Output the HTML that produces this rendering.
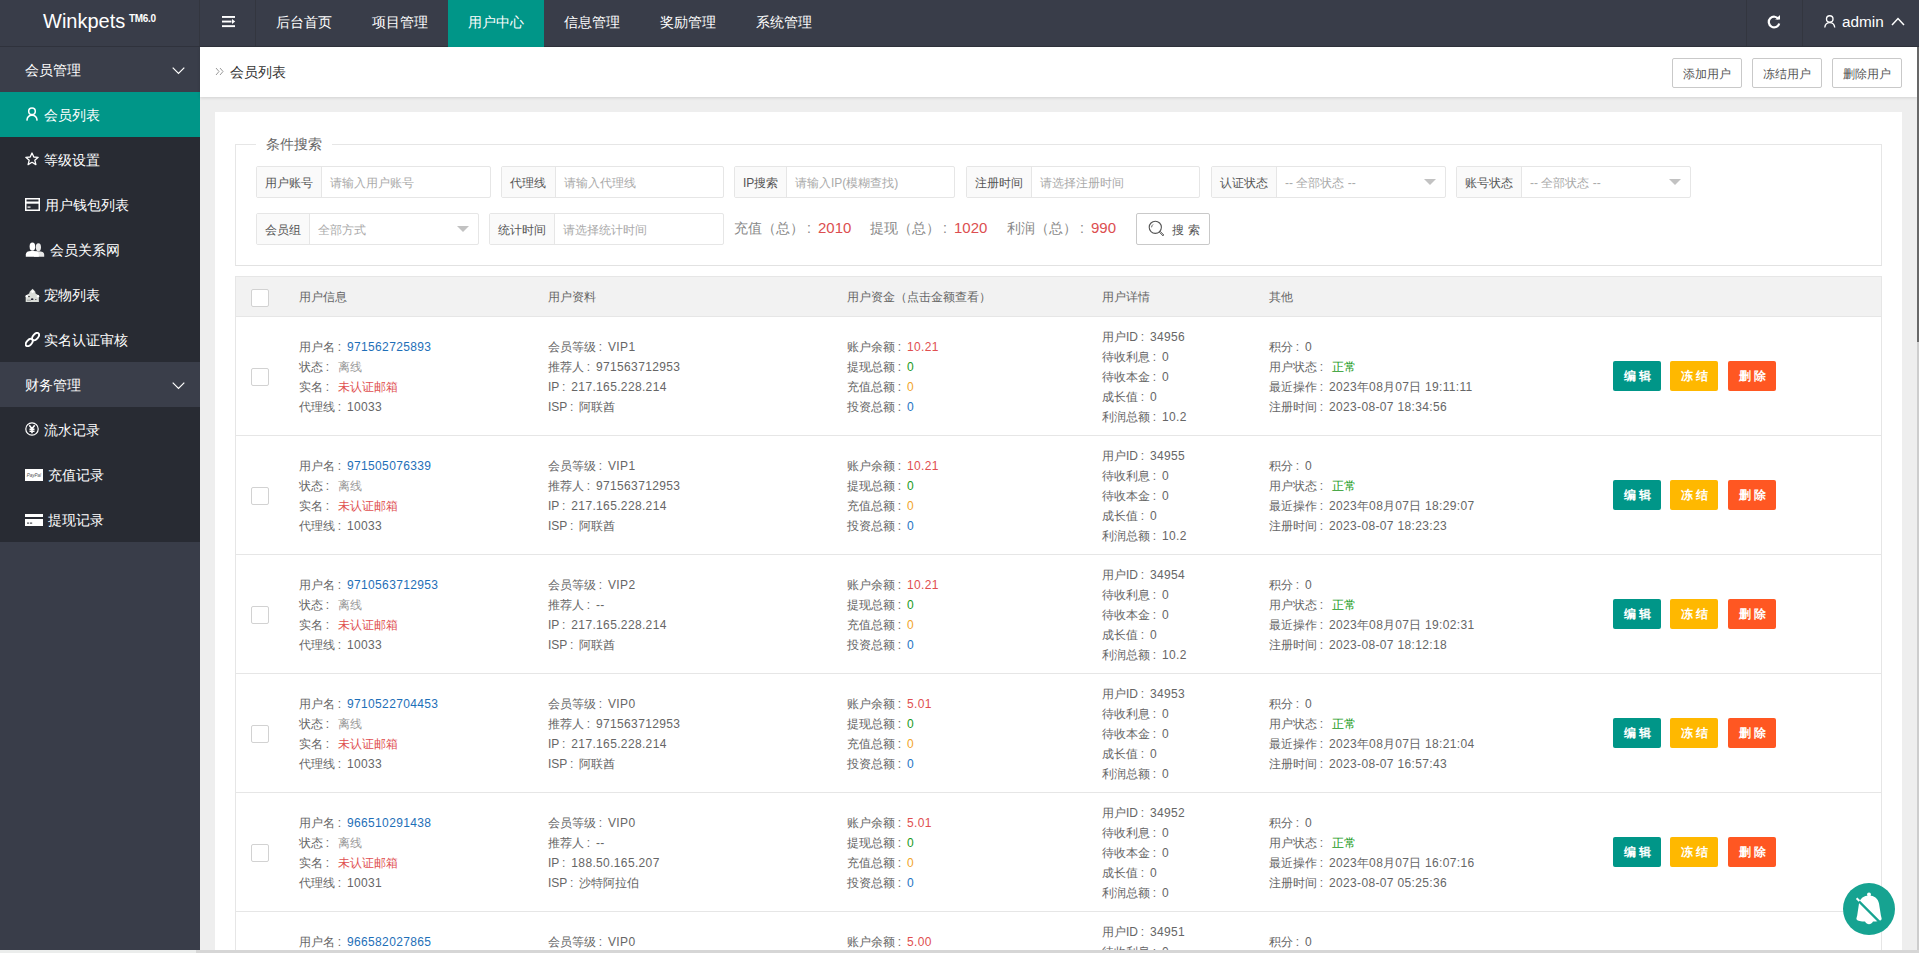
<!DOCTYPE html><html><head><meta charset="utf-8"><style>*{margin:0;padding:0;box-sizing:border-box}
html,body{width:1919px;height:953px;overflow:hidden;background:#eee;font-family:"Liberation Sans",sans-serif;color:#666;font-size:12px}
.abs{position:absolute}
#hdr{position:absolute;left:0;top:0;width:1919px;height:47px;background:#393D49;border-bottom:1px solid #2f323c}
.logo{position:absolute;left:43px;top:9px;color:#fff;font-size:20px;white-space:nowrap;line-height:24px}
.logo sup{font-size:10px;font-weight:bold;letter-spacing:-.3px;position:absolute;left:86px;top:4px;line-height:12px;vertical-align:baseline}
.vsep{position:absolute;top:0;width:1px;height:46px;background:#33363f}
.nav{position:absolute;top:0;height:47px;line-height:44px;color:#fff;font-size:14px;padding:0 20px}
.nav.on{background:#009688}
#side{position:absolute;left:0;top:47px;width:200px;height:903px;background:#393D49}
.sg{position:absolute;left:0;width:200px;height:45px;line-height:46px;color:#fff;font-size:14px;padding-left:25px;background:#3a3e4a}
.sc{position:absolute;left:0;width:200px;height:45px;line-height:47px;color:#fff;font-size:14px;background:#282B33}
.sc.on{background:#009688}
.sc span{position:absolute;top:0}
.sc svg{position:absolute}
.chev{position:absolute;left:171.5px;top:20px}
#bc{position:absolute;left:200px;top:47px;width:1717px;height:50px;background:#fff;box-shadow:0 1px 3px rgba(0,0,0,.12)}
.tbtn{position:absolute;top:11px;height:30px;width:70px;border:1px solid #C9C9C9;border-radius:2px;line-height:30px;text-align:center;color:#555;font-size:12px;background:#fff}
#card{position:absolute;left:215px;top:112px;width:1687px;height:850px;background:#fff}
fieldset{position:absolute;left:20px;top:32px;width:1647px;height:122px;border:1px solid #e6e6e6;border-bottom-color:#e2e2e2}
.legend{position:absolute;left:41px;top:22px;background:#fff;padding:0 10px;font-size:14px;color:#666;line-height:20px}
.fi{position:absolute;height:32px;border:1px solid #e6e6e6;border-radius:2px;background:#fff}
.fi .lb{position:absolute;left:0;top:0;height:30px;line-height:32px;padding:0 8px;background:#FAFAFA;border-right:1px solid #e6e6e6;color:#555;font-size:12px;white-space:nowrap}
.fi .ph{position:absolute;top:0;line-height:32px;color:#aaa;font-size:12px;white-space:nowrap}
.fi .tri{position:absolute;top:12px;width:0;height:0;border-left:6px solid transparent;border-right:6px solid transparent;border-top:6px solid #c2c2c2}
.stat{position:absolute;top:101px;font-size:14px;color:#888;white-space:nowrap;line-height:30px}
.stat b{font-weight:normal;color:#dc4e50;font-size:15px}
.sbtn{position:absolute;left:921px;top:101px;width:74px;height:32px;border:1px solid #c9c9c9;border-radius:2px;background:#fff;color:#555;font-size:12px;line-height:30px}
#tbl{position:absolute;left:20px;top:164px;width:1647px;height:700px;border-left:1px solid #e6e6e6;border-right:1px solid #e6e6e6;border-top:1px solid #e6e6e6}
.th{position:absolute;left:0;top:0;width:1645px;height:40px;background:#f2f2f2;border-bottom:1px solid #e6e6e6}
.th span{position:absolute;top:12px;line-height:16px;color:#666}
.cb{position:absolute;width:18px;height:18px;border:1px solid #d2d2d2;background:#fff;border-radius:2px}
.row{position:absolute;left:0;width:1645px;height:119px;border-bottom:1px solid #e6e6e6}
.col{position:absolute;line-height:20px;color:#666;white-space:nowrap}
.blue{color:#1E6FB8}.red{color:#e04f50}.grn{color:#1a9a22}.org{color:#f2a52a}.lbl{color:#2474c4}.gry{color:#999}
.ab{position:absolute;top:44px;height:30px;width:48px;line-height:30px;text-align:center;color:#fff;font-size:12px;border-radius:2px;letter-spacing:3px;text-indent:3px}
.fab{position:absolute;left:1843px;top:883px;width:52px;height:52px;border-radius:50%;background:#16a391}
#vs{position:absolute;left:1917px;top:47px;width:2px;height:295px;background:#686868}
#vt{position:absolute;left:1917px;top:342px;width:2px;height:608px;background:#cdcdcd}
#hs{position:absolute;left:0;top:950px;width:1919px;height:3px;background:#d6d6d6}

.n{font-style:normal;letter-spacing:.35px}
.ab{font-weight:bold}
.c{font-style:normal;display:inline-block;width:1em;padding-left:.22em}
</style></head><body>
<div id="hdr">
<div class="logo">Winkpets<sup>TM6.0</sup></div>
<div class="vsep" style="left:199px"></div><div class="vsep" style="left:255px"></div>
<svg class="abs" style="left:222px;top:16px" width="14" height="12" viewBox="0 0 14 12"><rect x="0" y="0" width="13" height="1.9" fill="#fff"/><rect x="0" y="4.6" width="9.5" height="1.9" fill="#fff"/><path d="M10 3 L13.2 5.55 L10 8.1Z" fill="#fff"/><rect x="0" y="9.2" width="13" height="1.9" fill="#fff"/></svg>
<div class="nav" style="left:256px">后台首页</div>
<div class="nav" style="left:352px">项目管理</div>
<div class="nav on" style="left:448px">用户中心</div>
<div class="nav" style="left:544px">信息管理</div>
<div class="nav" style="left:640px">奖励管理</div>
<div class="nav" style="left:736px">系统管理</div>
<div class="vsep" style="left:1746px"></div><div class="vsep" style="left:1802px"></div>
<svg class="abs" style="left:1767px;top:15px" width="14" height="14" viewBox="0 0 14 14"><path d="M11.6 4.2 A5.3 5.3 0 1 0 12.2 8.5" fill="none" stroke="#fff" stroke-width="2.2"/><path d="M8.2 4.6 L13 4.6 L13 0 Z" fill="#fff"/></svg>
<svg class="abs" style="left:1824px;top:15px" width="11.5" height="13" viewBox="0 0 12 14" preserveAspectRatio="none"><circle cx="6" cy="4.2" r="3.4" fill="none" stroke="#fff" stroke-width="1.4"/><path d="M0.8 13.5 C1.2 9.8 3.2 8.2 6 8.2 C8.8 8.2 10.8 9.8 11.2 13.5" fill="none" stroke="#fff" stroke-width="1.4"/></svg>
<div class="abs" style="left:1842px;top:12px;color:#fff;font-size:15.3px;line-height:20px">admin</div>
<svg class="abs" style="left:1891px;top:17px" width="14" height="9" viewBox="0 0 14 9"><path d="M1 8 L7 1.5 L13 8" fill="none" stroke="#fff" stroke-width="1.5"/></svg>
</div>
<div id="side">
<div class="sg" style="top:0">会员管理<svg class="chev" width="13" height="8" viewBox="0 0 13 8"><path d="M0.7 0.7 L6.5 6.5 L12.3 0.7" fill="none" stroke="#fff" stroke-width="1.2"/></svg></div>
<div class="sc on" style="top:45px"><svg style="left:26px;top:15px" width="12" height="14" viewBox="0 0 12 14"><circle cx="6" cy="4.2" r="3.3" fill="none" stroke="#fff" stroke-width="1.5"/><path d="M0.9 13.6 C1.2 9.8 3.2 8.3 6 8.3 C8.8 8.3 10.8 9.8 11.1 13.6" fill="none" stroke="#fff" stroke-width="1.5"/></svg><span style="left:44px">会员列表</span></div>
<div class="sc" style="top:90px"><svg style="left:25px;top:15px" width="14" height="14" viewBox="0 0 14 14"><path d="M7 1 L8.8 5 L13.2 5.3 L9.8 8.2 L10.9 12.6 L7 10.3 L3.1 12.6 L4.2 8.2 L0.8 5.3 L5.2 5Z" fill="none" stroke="#fff" stroke-width="1.3" stroke-linejoin="round"/></svg><span style="left:44px">等级设置</span></div>
<div class="sc" style="top:135px"><svg style="left:25px;top:16px" width="15" height="13" viewBox="0 0 15 13"><rect x="0.75" y="0.75" width="13.5" height="11.5" fill="none" stroke="#fff" stroke-width="1.5"/><rect x="0.75" y="3.5" width="13.5" height="2.2" fill="#fff"/><rect x="2.5" y="8.5" width="3" height="1.2" fill="#fff"/></svg><span style="left:45px">用户钱包列表</span></div>
<div class="sc" style="top:180px"><svg style="left:25px;top:15px" width="20" height="15" viewBox="0 0 20 15"><ellipse cx="13.4" cy="5.2" rx="2.6" ry="3.9" fill="#e8e8e8"/><path d="M9 15 L9 11 C10 9.6 11.5 9.2 13.5 9.2 C17 9.2 19.2 10.2 19.2 12.6 L19.2 14.8 L9 14.8Z" fill="#e8e8e8"/><ellipse cx="7.4" cy="4.7" rx="2.8" ry="4.1" fill="#fff"/><path d="M0.8 14.8 L0.8 12.6 C0.8 10.1 3 9 6 9 L9 9 C12 9 13.8 10.1 13.8 12.6 L13.8 14.8Z" fill="#fff"/></svg><span style="left:50px">会员关系网</span></div>
<div class="sc" style="top:225px"><svg style="left:25px;top:16px" width="15" height="15" viewBox="0 0 15 15"><path d="M7.6 0.8 L10.2 3.5 L10.6 5.5 L13.8 7.5 L13.9 14 L0.7 14 L0.7 7.5 L4.2 5.5 L4.8 3.5Z" fill="#d9dcd8"/><circle cx="7.6" cy="3.6" r="1.3" fill="#fff"/><circle cx="1.8" cy="8.2" r="1.2" fill="#fff"/><circle cx="13" cy="8.2" r="1.2" fill="#fff"/><ellipse cx="4" cy="8.6" rx="1" ry=".6" fill="#333"/><ellipse cx="7.2" cy="11.2" rx="1.3" ry=".9" fill="#223"/><ellipse cx="10.8" cy="11.4" rx=".8" ry=".5" fill="#555"/><path d="M2 12.2 L6 12.2" stroke="#8a8f90" stroke-width=".8"/></svg><span style="left:44px">宠物列表</span></div>
<div class="sc" style="top:270px"><svg style="left:25px;top:15px" width="15" height="15" viewBox="0 0 15 15"><ellipse cx="4.2" cy="10.6" rx="4.3" ry="2.5" transform="rotate(-48 4.2 10.6)" fill="none" stroke="#fff" stroke-width="1.9"/><ellipse cx="10.6" cy="4.6" rx="4.3" ry="2.5" transform="rotate(-48 10.6 4.6)" fill="none" stroke="#fff" stroke-width="1.9"/></svg><span style="left:44px">实名认证审核</span></div>
<div class="sg" style="top:315px">财务管理<svg class="chev" width="13" height="8" viewBox="0 0 13 8"><path d="M0.7 0.7 L6.5 6.5 L12.3 0.7" fill="none" stroke="#fff" stroke-width="1.2"/></svg></div>
<div class="sc" style="top:360px"><svg style="left:25px;top:15px" width="14" height="14" viewBox="0 0 14 14"><circle cx="7" cy="7" r="6.2" fill="none" stroke="#fff" stroke-width="1.2"/><path d="M4.3 3.3 L7 6.8 L9.7 3.3 M7 6.8 L7 11.2 M4.5 7.3 L9.5 7.3 M4.5 9.3 L9.5 9.3" fill="none" stroke="#fff" stroke-width="1.6"/></svg><span style="left:44px">流水记录</span></div>
<div class="sc" style="top:405px"><svg style="left:25px;top:17px" width="18" height="12" viewBox="0 0 18 12"><rect x="0" y="0" width="18" height="12" fill="#fff"/><text x="9" y="7.6" font-size="4.5" text-anchor="middle" fill="#555" font-style="italic" font-family="Liberation Sans">PayPal</text></svg><span style="left:48px">充值记录</span></div>
<div class="sc" style="top:450px"><svg style="left:25px;top:17px" width="18" height="12" viewBox="0 0 18 12"><rect x="0" y="0" width="18" height="3" fill="#fff"/><rect x="0" y="5" width="18" height="7" fill="#fff"/><rect x="2" y="8.6" width="2.2" height="1" fill="#282B33"/><rect x="5" y="8.6" width="2.2" height="1" fill="#282B33"/></svg><span style="left:48px">提现记录</span></div>
</div>
<div id="bc">
<svg class="abs" style="left:15px;top:20px" width="9" height="9" viewBox="0 0 9 9"><path d="M1 1 L4 4.5 L1 8 M5 1 L8 4.5 L5 8" fill="none" stroke="#999" stroke-width="1"/></svg>
<div class="abs" style="left:30px;top:15px;font-size:14px;color:#333;line-height:20px">会员列表</div>
<div class="tbtn" style="left:1472px">添加用户</div>
<div class="tbtn" style="left:1552px">冻结用户</div>
<div class="tbtn" style="left:1632px">删除用户</div>
</div>
<div id="card">
<fieldset></fieldset><div class="legend">条件搜索</div>
<div class="fi" style="left:41px;top:54px;width:235px"><div class="lb" style="width:65px">用户账号</div><div class="ph" style="left:73px">请输入用户账号</div></div>
<div class="fi" style="left:286px;top:54px;width:223px"><div class="lb" style="width:54px">代理线</div><div class="ph" style="left:62px">请输入代理线</div></div>
<div class="fi" style="left:519px;top:54px;width:221px"><div class="lb" style="width:52px">IP搜索</div><div class="ph" style="left:60px">请输入IP(模糊查找)</div></div>
<div class="fi" style="left:751px;top:54px;width:234px"><div class="lb" style="width:65px">注册时间</div><div class="ph" style="left:73px">请选择注册时间</div></div>
<div class="fi" style="left:996px;top:54px;width:235px"><div class="lb" style="width:65px">认证状态</div><div class="ph" style="left:73px">-- 全部状态 --</div><div class="tri" style="left:212px"></div></div>
<div class="fi" style="left:1241px;top:54px;width:235px"><div class="lb" style="width:65px">账号状态</div><div class="ph" style="left:73px">-- 全部状态 --</div><div class="tri" style="left:212px"></div></div>
<div class="fi" style="left:41px;top:101px;width:223px"><div class="lb" style="width:53px">会员组</div><div class="ph" style="left:61px">全部方式</div><div class="tri" style="left:200px"></div></div>
<div class="fi" style="left:274px;top:101px;width:235px"><div class="lb" style="width:65px">统计时间</div><div class="ph" style="left:73px">请选择统计时间</div></div>
<div class="stat" style="left:519px">充值（总）<i class="c">:</i><b>2010</b></div>
<div class="stat" style="left:655px">提现（总）<i class="c">:</i><b>1020</b></div>
<div class="stat" style="left:792px">利润（总）<i class="c">:</i><b>990</b></div>
<div class="sbtn"><svg class="abs" style="left:11px;top:6px" width="18" height="18" viewBox="0 0 18 18"><circle cx="7.3" cy="7.3" r="6.1" fill="none" stroke="#555" stroke-width="1.1"/><path d="M3.6 7.3 A3.7 3.7 0 0 1 5 4.5" fill="none" stroke="#555" stroke-width=".9"/><path d="M11.2 12 L12 11.2 L15.8 15 L15 15.8 Z" fill="none" stroke="#555" stroke-width="1"/></svg><span class="abs" style="left:35px;top:1px;letter-spacing:4px">搜索</span></div>
<div id="tbl">
<div class="th"><div class="cb" style="left:15px;top:12px"></div>
<span style="left:63px">用户信息</span>
<span style="left:312px">用户资料</span>
<span style="left:611px">用户资金（点击金额查看）</span>
<span style="left:866px">用户详情</span>
<span style="left:1033px">其他</span>
</div>
<div class="row" style="top:40px">
<div class="cb" style="left:15px;top:51px"></div>
<div class="col" style="left:63px;top:20px">用户名<i class="c">:</i><span class="blue"><i class="n">971562725893</i></span><br>状态<i class="c">:</i>&nbsp;<span class="gry">离线</span><br>实名<i class="c">:</i>&nbsp;<span class="red">未认证邮箱</span><br>代理线<i class="c">:</i><i class="n">10033</i></div>
<div class="col" style="left:312px;top:20px">会员等级<i class="c">:</i><i class="n">VIP1</i><br>推荐人<i class="c">:</i><i class="n">971563712953</i><br>IP<i class="c">:</i><i class="n">217.165.228.214</i><br>ISP<i class="c">:</i>阿联酋</div>
<div class="col" style="left:611px;top:20px">账户余额<i class="c">:</i><span class="red"><i class="n">10.21</i></span><br>提现总额<i class="c">:</i><span class="grn"><i class="n">0</i></span><br>充值总额<i class="c">:</i><span class="org"><i class="n">0</i></span><br>投资总额<i class="c">:</i><span class="lbl"><i class="n">0</i></span></div>
<div class="col" style="left:866px;top:10px">用户ID<i class="c">:</i><i class="n">34956</i><br>待收利息<i class="c">:</i><i class="n">0</i><br>待收本金<i class="c">:</i><i class="n">0</i><br>成长值<i class="c">:</i><i class="n">0</i><br>利润总额<i class="c">:</i><i class="n">10.2</i></div>
<div class="col" style="left:1033px;top:20px">积分<i class="c">:</i><i class="n">0</i><br>用户状态<i class="c">:</i>&nbsp;<span class="grn">正常</span><br>最近操作<i class="c">:</i><i class="n">2023</i>年<i class="n">08</i>月<i class="n">07</i>日<i class="n"> 19:11:11</i><br>注册时间<i class="c">:</i><i class="n">2023-08-07 18:34:56</i></div>
<div class="ab" style="left:1377px;background:#009688">编辑</div>
<div class="ab" style="left:1434px;background:#FFB800">冻结</div>
<div class="ab" style="left:1492px;background:#FF5722">删除</div>
</div>
<div class="row" style="top:159px">
<div class="cb" style="left:15px;top:51px"></div>
<div class="col" style="left:63px;top:20px">用户名<i class="c">:</i><span class="blue"><i class="n">971505076339</i></span><br>状态<i class="c">:</i>&nbsp;<span class="gry">离线</span><br>实名<i class="c">:</i>&nbsp;<span class="red">未认证邮箱</span><br>代理线<i class="c">:</i><i class="n">10033</i></div>
<div class="col" style="left:312px;top:20px">会员等级<i class="c">:</i><i class="n">VIP1</i><br>推荐人<i class="c">:</i><i class="n">971563712953</i><br>IP<i class="c">:</i><i class="n">217.165.228.214</i><br>ISP<i class="c">:</i>阿联酋</div>
<div class="col" style="left:611px;top:20px">账户余额<i class="c">:</i><span class="red"><i class="n">10.21</i></span><br>提现总额<i class="c">:</i><span class="grn"><i class="n">0</i></span><br>充值总额<i class="c">:</i><span class="org"><i class="n">0</i></span><br>投资总额<i class="c">:</i><span class="lbl"><i class="n">0</i></span></div>
<div class="col" style="left:866px;top:10px">用户ID<i class="c">:</i><i class="n">34955</i><br>待收利息<i class="c">:</i><i class="n">0</i><br>待收本金<i class="c">:</i><i class="n">0</i><br>成长值<i class="c">:</i><i class="n">0</i><br>利润总额<i class="c">:</i><i class="n">10.2</i></div>
<div class="col" style="left:1033px;top:20px">积分<i class="c">:</i><i class="n">0</i><br>用户状态<i class="c">:</i>&nbsp;<span class="grn">正常</span><br>最近操作<i class="c">:</i><i class="n">2023</i>年<i class="n">08</i>月<i class="n">07</i>日<i class="n"> 18:29:07</i><br>注册时间<i class="c">:</i><i class="n">2023-08-07 18:23:23</i></div>
<div class="ab" style="left:1377px;background:#009688">编辑</div>
<div class="ab" style="left:1434px;background:#FFB800">冻结</div>
<div class="ab" style="left:1492px;background:#FF5722">删除</div>
</div>
<div class="row" style="top:278px">
<div class="cb" style="left:15px;top:51px"></div>
<div class="col" style="left:63px;top:20px">用户名<i class="c">:</i><span class="blue"><i class="n">9710563712953</i></span><br>状态<i class="c">:</i>&nbsp;<span class="gry">离线</span><br>实名<i class="c">:</i>&nbsp;<span class="red">未认证邮箱</span><br>代理线<i class="c">:</i><i class="n">10033</i></div>
<div class="col" style="left:312px;top:20px">会员等级<i class="c">:</i><i class="n">VIP2</i><br>推荐人<i class="c">:</i><i class="n">--</i><br>IP<i class="c">:</i><i class="n">217.165.228.214</i><br>ISP<i class="c">:</i>阿联酋</div>
<div class="col" style="left:611px;top:20px">账户余额<i class="c">:</i><span class="red"><i class="n">10.21</i></span><br>提现总额<i class="c">:</i><span class="grn"><i class="n">0</i></span><br>充值总额<i class="c">:</i><span class="org"><i class="n">0</i></span><br>投资总额<i class="c">:</i><span class="lbl"><i class="n">0</i></span></div>
<div class="col" style="left:866px;top:10px">用户ID<i class="c">:</i><i class="n">34954</i><br>待收利息<i class="c">:</i><i class="n">0</i><br>待收本金<i class="c">:</i><i class="n">0</i><br>成长值<i class="c">:</i><i class="n">0</i><br>利润总额<i class="c">:</i><i class="n">10.2</i></div>
<div class="col" style="left:1033px;top:20px">积分<i class="c">:</i><i class="n">0</i><br>用户状态<i class="c">:</i>&nbsp;<span class="grn">正常</span><br>最近操作<i class="c">:</i><i class="n">2023</i>年<i class="n">08</i>月<i class="n">07</i>日<i class="n"> 19:02:31</i><br>注册时间<i class="c">:</i><i class="n">2023-08-07 18:12:18</i></div>
<div class="ab" style="left:1377px;background:#009688">编辑</div>
<div class="ab" style="left:1434px;background:#FFB800">冻结</div>
<div class="ab" style="left:1492px;background:#FF5722">删除</div>
</div>
<div class="row" style="top:397px">
<div class="cb" style="left:15px;top:51px"></div>
<div class="col" style="left:63px;top:20px">用户名<i class="c">:</i><span class="blue"><i class="n">9710522704453</i></span><br>状态<i class="c">:</i>&nbsp;<span class="gry">离线</span><br>实名<i class="c">:</i>&nbsp;<span class="red">未认证邮箱</span><br>代理线<i class="c">:</i><i class="n">10033</i></div>
<div class="col" style="left:312px;top:20px">会员等级<i class="c">:</i><i class="n">VIP0</i><br>推荐人<i class="c">:</i><i class="n">971563712953</i><br>IP<i class="c">:</i><i class="n">217.165.228.214</i><br>ISP<i class="c">:</i>阿联酋</div>
<div class="col" style="left:611px;top:20px">账户余额<i class="c">:</i><span class="red"><i class="n">5.01</i></span><br>提现总额<i class="c">:</i><span class="grn"><i class="n">0</i></span><br>充值总额<i class="c">:</i><span class="org"><i class="n">0</i></span><br>投资总额<i class="c">:</i><span class="lbl"><i class="n">0</i></span></div>
<div class="col" style="left:866px;top:10px">用户ID<i class="c">:</i><i class="n">34953</i><br>待收利息<i class="c">:</i><i class="n">0</i><br>待收本金<i class="c">:</i><i class="n">0</i><br>成长值<i class="c">:</i><i class="n">0</i><br>利润总额<i class="c">:</i><i class="n">0</i></div>
<div class="col" style="left:1033px;top:20px">积分<i class="c">:</i><i class="n">0</i><br>用户状态<i class="c">:</i>&nbsp;<span class="grn">正常</span><br>最近操作<i class="c">:</i><i class="n">2023</i>年<i class="n">08</i>月<i class="n">07</i>日<i class="n"> 18:21:04</i><br>注册时间<i class="c">:</i><i class="n">2023-08-07 16:57:43</i></div>
<div class="ab" style="left:1377px;background:#009688">编辑</div>
<div class="ab" style="left:1434px;background:#FFB800">冻结</div>
<div class="ab" style="left:1492px;background:#FF5722">删除</div>
</div>
<div class="row" style="top:516px">
<div class="cb" style="left:15px;top:51px"></div>
<div class="col" style="left:63px;top:20px">用户名<i class="c">:</i><span class="blue"><i class="n">966510291438</i></span><br>状态<i class="c">:</i>&nbsp;<span class="gry">离线</span><br>实名<i class="c">:</i>&nbsp;<span class="red">未认证邮箱</span><br>代理线<i class="c">:</i><i class="n">10031</i></div>
<div class="col" style="left:312px;top:20px">会员等级<i class="c">:</i><i class="n">VIP0</i><br>推荐人<i class="c">:</i><i class="n">--</i><br>IP<i class="c">:</i><i class="n">188.50.165.207</i><br>ISP<i class="c">:</i>沙特阿拉伯</div>
<div class="col" style="left:611px;top:20px">账户余额<i class="c">:</i><span class="red"><i class="n">5.01</i></span><br>提现总额<i class="c">:</i><span class="grn"><i class="n">0</i></span><br>充值总额<i class="c">:</i><span class="org"><i class="n">0</i></span><br>投资总额<i class="c">:</i><span class="lbl"><i class="n">0</i></span></div>
<div class="col" style="left:866px;top:10px">用户ID<i class="c">:</i><i class="n">34952</i><br>待收利息<i class="c">:</i><i class="n">0</i><br>待收本金<i class="c">:</i><i class="n">0</i><br>成长值<i class="c">:</i><i class="n">0</i><br>利润总额<i class="c">:</i><i class="n">0</i></div>
<div class="col" style="left:1033px;top:20px">积分<i class="c">:</i><i class="n">0</i><br>用户状态<i class="c">:</i>&nbsp;<span class="grn">正常</span><br>最近操作<i class="c">:</i><i class="n">2023</i>年<i class="n">08</i>月<i class="n">07</i>日<i class="n"> 16:07:16</i><br>注册时间<i class="c">:</i><i class="n">2023-08-07 05:25:36</i></div>
<div class="ab" style="left:1377px;background:#009688">编辑</div>
<div class="ab" style="left:1434px;background:#FFB800">冻结</div>
<div class="ab" style="left:1492px;background:#FF5722">删除</div>
</div>
<div class="row" style="top:635px">
<div class="cb" style="left:15px;top:51px"></div>
<div class="col" style="left:63px;top:20px">用户名<i class="c">:</i><span class="blue"><i class="n">966582027865</i></span><br>状态<i class="c">:</i>&nbsp;<span class="gry">离线</span><br>实名<i class="c">:</i>&nbsp;<span class="red">未认证邮箱</span><br>代理线<i class="c">:</i><i class="n">10031</i></div>
<div class="col" style="left:312px;top:20px">会员等级<i class="c">:</i><i class="n">VIP0</i><br>推荐人<i class="c">:</i><i class="n">--</i><br>IP<i class="c">:</i><i class="n">188.50.165.207</i><br>ISP<i class="c">:</i>沙特阿拉伯</div>
<div class="col" style="left:611px;top:20px">账户余额<i class="c">:</i><span class="red"><i class="n">5.00</i></span><br>提现总额<i class="c">:</i><span class="grn"><i class="n">0</i></span><br>充值总额<i class="c">:</i><span class="org"><i class="n">0</i></span><br>投资总额<i class="c">:</i><span class="lbl"><i class="n">0</i></span></div>
<div class="col" style="left:866px;top:10px">用户ID<i class="c">:</i><i class="n">34951</i><br>待收利息<i class="c">:</i><i class="n">0</i><br>待收本金<i class="c">:</i><i class="n">0</i><br>成长值<i class="c">:</i><i class="n">0</i><br>利润总额<i class="c">:</i><i class="n">0</i></div>
<div class="col" style="left:1033px;top:20px">积分<i class="c">:</i><i class="n">0</i><br>用户状态<i class="c">:</i>&nbsp;<span class="grn">正常</span><br>最近操作<i class="c">:</i><i class="n">2023</i>年<i class="n">08</i>月<i class="n">07</i>日<i class="n"> 16:07:16</i><br>注册时间<i class="c">:</i><i class="n">2023-08-07 05:25:36</i></div>
<div class="ab" style="left:1377px;background:#009688">编辑</div>
<div class="ab" style="left:1434px;background:#FFB800">冻结</div>
<div class="ab" style="left:1492px;background:#FF5722">删除</div>
</div>
</div>
</div>
<div class="fab"><svg class="abs" style="left:0;top:0" width="52" height="52" viewBox="0 0 52 52"><circle cx="26" cy="11.6" r="2" fill="#fff"/><path d="M26 12.6 C21 12.6 17 15.5 16 20.5 L14.2 32.5 C13.8 34.5 13 35.6 13.6 36.6 C14.6 38.2 18 38.6 22 38.6 C23 40.6 24.5 41.3 26 41.3 C27.5 41.3 29 40.6 30 38.6 C34 38.6 37.6 38.2 38.5 36.6 C39 35.6 38.3 34.5 37.9 32.5 L36 20.5 C35 15.5 31 12.6 26 12.6Z" fill="#fff"/><path d="M15.2 17.6 L39 41.4" stroke="#16a391" stroke-width="2.2"/><path d="M13.6 15.2 L16.4 18" stroke="#fff" stroke-width="2"/></svg></div>
<div id="vt"></div><div id="vs"></div><div id="hs"></div><div class="abs" style="left:0;top:950px;width:196px;height:3px;background:#ebedec"></div>
</body></html>
